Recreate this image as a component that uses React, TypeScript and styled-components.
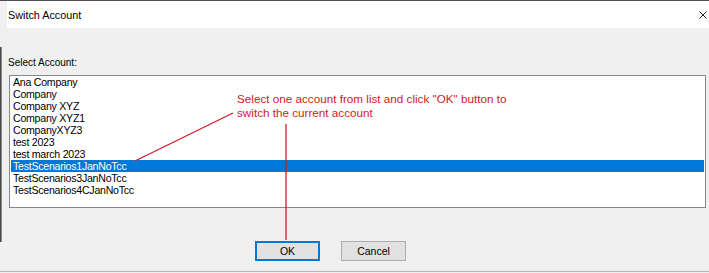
import React from "react";
import styled, { createGlobalStyle } from "styled-components";

const Global = createGlobalStyle`
  html, body { margin: 0; padding: 0; background: #f0f0f0; }
  body { width: 709px; height: 273px; overflow: hidden; }
`;

const Window = styled.div`
  position: relative;
  width: 709px;
  height: 273px;
  box-sizing: border-box;
  border-top: 1px solid #4f4f4f;
  background: #f0f0f0;
  font-family: "Liberation Sans", Arial, sans-serif;
  color: #000;
  display: flex;
  flex-direction: column;
`;

const TitleBar = styled.div`
  height: 27px;
  margin-left: 7px;
  padding: 0 2px 0 1px;
  background: #ffffff;
  display: flex;
  align-items: center;
  justify-content: space-between;
  font-size: 10.8px;
  color: #000;
`;

const TitleText = styled.span`
  line-height: 12px;
  margin-top: 1px;
`;

const CloseIcon = styled.svg`
  display: block;
  margin-top: 1px;
`;

const Body = styled.div`
  flex: 1;
  padding: 0 3px 0 9px;
  display: flex;
  flex-direction: column;
  border-bottom: 1px solid #b4b4b4;
  margin-bottom: 1px;
  background:
    linear-gradient(to right, #4a4a4a 0, #4a4a4a 1px, #8a8a8a 1px, #8a8a8a 2px, transparent 2px) no-repeat 0 19px / 2px 195px,
    #f0f0f0;
`;

const Label = styled.div`
  margin-top: 29px;
  height: 12px;
  line-height: 12px;
  font-size: 10px;
  margin-left: -1px;
`;

const ListBox = styled.div`
  margin-top: 6px;
  height: 133px;
  box-sizing: border-box;
  border: 1px solid #828790;
  background: #ffffff;
  padding: 0 1px;
  display: flex;
  flex-direction: column;
`;

const Item = styled.div<{ $selected?: boolean }>`
  height: 12px;
  line-height: 12px;
  font-size: 10.6px;
  letter-spacing: -0.25px;
  padding-left: 2px;
  white-space: nowrap;
  background: ${(p) => (p.$selected ? "#0078d7" : "transparent")};
  color: ${(p) => (p.$selected ? "#ffffff" : "#000000")};
`;

const ButtonRow = styled.div`
  margin-top: 33px;
  padding-left: 246px;
  display: flex;
  gap: 21px;
`;

const Button = styled.div<{ $default?: boolean }>`
  width: 65px;
  height: 20px;
  box-sizing: border-box;
  background: #e1e1e1;
  border: ${(p) => (p.$default ? "2px solid #0078d7" : "1px solid #adadad")};
  display: flex;
  align-items: center;
  justify-content: center;
  font-size: 10.5px;
  color: #000;
`;

const Overlay = styled.svg`
  position: absolute;
  left: 0;
  top: 0;
  pointer-events: none;
`;

const Note = styled.div`
  position: absolute;
  left: 237px;
  top: 91px;
  font-family: "Liberation Sans", Arial, sans-serif;
  font-size: 11.7px;
  line-height: 14px;
  color: #d01c24;
  white-space: nowrap;
  pointer-events: none;
`;

const accounts = [
  "Ana Company",
  "Company",
  "Company XYZ",
  "Company XYZ1",
  "CompanyXYZ3",
  "test 2023",
  "test march 2023",
  "TestScenarios1JanNoTcc",
  "TestScenarios3JanNoTcc",
  "TestScenarios4CJanNoTcc",
];

export default function App() {
  return (
    <>
      <Global />
      <Window>
        <TitleBar>
          <TitleText>Switch Account</TitleText>
          <CloseIcon width="8" height="8" viewBox="0 0 8 8">
            <path d="M0.5 0.5 L7.5 7.5 M7.5 0.5 L0.5 7.5" stroke="#222" strokeWidth="1" />
          </CloseIcon>
        </TitleBar>
        <Body>
          <Label>Select Account:</Label>
          <ListBox>
            {accounts.map((a, i) => (
              <Item key={a} $selected={i === 7}>
                {a}
              </Item>
            ))}
          </ListBox>
          <ButtonRow>
            <Button $default>OK</Button>
            <Button>Cancel</Button>
          </ButtonRow>
        </Body>
        <Overlay width="709" height="273" viewBox="0 0 709 273">
          <line x1="233" y1="112" x2="135" y2="160" stroke="#d01c24" strokeWidth="1.3" />
          <line x1="286" y1="123" x2="286" y2="239" stroke="#d01c24" strokeWidth="1.3" />
        </Overlay>
        <Note>
          Select one account from list and click "OK" button to
          <br />
          switch the current account
        </Note>
      </Window>
    </>
  );
}
